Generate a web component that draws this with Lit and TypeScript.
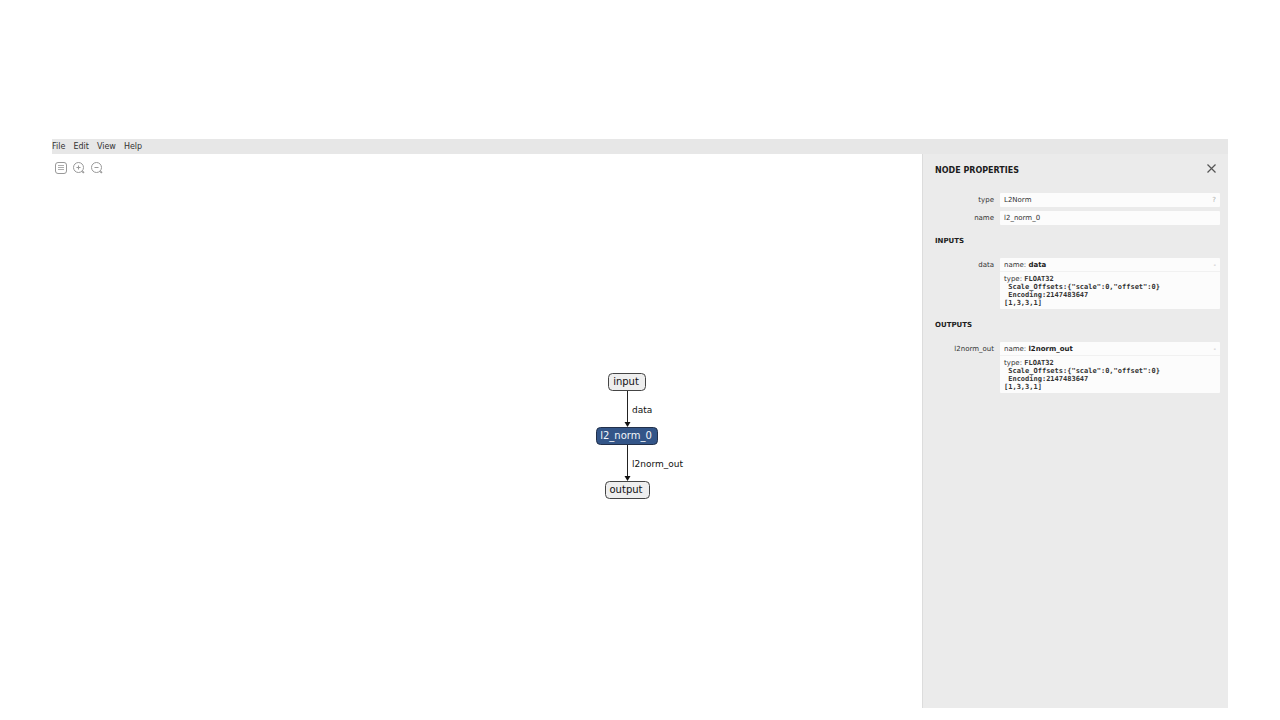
import { LitElement, html, svg, css } from "lit";
import { customElement, property } from "lit/decorators.js";

interface GraphNode { label: string; x: number; y: number; width: number; selected?: boolean }
interface GraphEdge { label: string; y1: number; y2: number }

const NODES: GraphNode[] = [
  { label: "input", x: 556, y: 219, width: 38 },
  { label: "l2_norm_0", x: 544, y: 273, width: 62, selected: true },
  { label: "output", x: 553, y: 327, width: 45 },
];
const EDGES: GraphEdge[] = [
  { label: "data", y1: 237, y2: 273 },
  { label: "l2norm_out", y1: 291, y2: 327 },
];

@customElement("graph-view")
class GraphView extends LitElement {
  static styles = css`
    :host { display: block; position: relative; flex: 1; min-width: 0; background: #fff; }
    .toolbar { position: absolute; top: 7px; left: 2px; display: flex; gap: 4px; }
    .tool { width: 14px; height: 14px; padding: 0; border: 0; background: none; }
    .tool svg { display: block; width: 14px; height: 14px; fill: none; stroke: #999; }
    .graph { display: block; width: 100%; height: 100%; }
    .node rect { fill: #eee; stroke: #444; stroke-width: 1; }
    .node.selected rect { fill: #335588; stroke: #22304a; }
    .node text { font-size: 10px; fill: #111; text-anchor: middle; }
    .node.selected text { fill: #f2f5fa; }
    .edge path { stroke: #222; stroke-width: 1; fill: none; }
    .edge polygon { fill: #111; }
    .edge text { font-size: 9px; fill: #111; }
  `;

  render() {
    return html`
      <svg class="graph" role="img" aria-label="Model graph">
        ${EDGES.map((e) => svg`<g class="edge">
          <path d="M575.5 ${e.y1}V${e.y2 - 3}"></path>
          <polygon points="572.5,${e.y2 - 5} 578.5,${e.y2 - 5} 575.5,${e.y2}"></polygon>
          <text x="580" y=${e.y1 + 22}>${e.label}</text>
        </g>`)}
        ${NODES.map((n) => svg`<g class=${n.selected ? "node selected" : "node"}>
          <rect x=${n.x + 0.5} y=${n.y + 0.5} width=${n.width - 1} height="17" rx="4"></rect>
          <text x="574" y=${n.y + 12}>${n.label}</text>
        </g>`)}
      </svg>
      <div class="toolbar">
        <button class="tool" aria-label="Model properties">
          <svg viewBox="0 0 14 14"><rect x="1.5" y="1.5" width="11" height="11" rx="2.5"></rect><path d="M4 4.5h6M4 6.5h6M4 8.5h6" stroke-width="0.8"></path></svg>
        </button>
        <button class="tool" aria-label="Zoom in">
          <svg viewBox="0 0 14 14"><circle cx="6.5" cy="6.5" r="5"></circle><path d="M4.5 6.5h4M6.5 4.5v4"></path><path d="M10.3 10.3l1.6 1.6" stroke-width="1.8"></path></svg>
        </button>
        <button class="tool" aria-label="Zoom out">
          <svg viewBox="0 0 14 14"><circle cx="6.5" cy="6.5" r="5"></circle><path d="M4.5 6.5h4"></path><path d="M10.3 10.3l1.6 1.6" stroke-width="1.8"></path></svg>
        </button>
      </div>
    `;
  }
}

@customElement("argument-card")
class ArgumentCard extends LitElement {
  @property() name = "";

  static styles = css`
    :host { display: block; background: #fcfcfc; color: #333; border-radius: 1px; line-height: 8px; }
    .head { display: flex; justify-content: space-between; height: 13px; line-height: 14px; padding: 0 4px; border-bottom: 1px solid #f1f1f1; }
    .toggle { padding: 0; border: 0; background: none; font: inherit; color: #aaa; }
    .body { padding: 3px 4px 2px; }
    .code { margin: 0; font: bold 7px/8px "DejaVu Sans Mono", monospace; }
    .first { font: bold 7px/8px "DejaVu Sans Mono", monospace; }
    b { color: #1c1c1c; }
  `;

  render() {
    return html`
      <div class="head"><span>name: <b>${this.name}</b></span><button class="toggle" aria-label="Collapse">-</button></div>
      <div class="body">
        <div>type: <span class="first">FLOAT32</span></div>
        <pre class="code"> Scale_Offsets:{"scale":0,"offset":0}
 Encoding:2147483647
[1,3,3,1]</pre>
      </div>
    `;
  }
}

@customElement("node-properties")
class NodeProperties extends LitElement {
  static styles = css`
    :host { display: block; box-sizing: border-box; flex: 0 0 306px; padding: 9px 8px 0 12px; border-left: 1px solid #dcdcdc; background: #ebebeb; color: #333; font-size: 7px; }
    .top { display: flex; justify-content: space-between; height: 30px; }
    h1 { margin: 0; font-size: 8px; line-height: 16px; color: #1c1c1c; }
    h2 { margin: 0; font-size: 7px; line-height: 12px; color: #1c1c1c; }
    .close { width: 16px; height: 12px; padding: 0; border: 0; background: none; }
    .close svg { display: block; width: 16px; height: 12px; stroke: #555; stroke-width: 1.2; }
    .fields { display: flex; flex-direction: column; gap: 4px; padding-bottom: 10px; }
    .row { display: grid; grid-template-columns: 59px minmax(0, 1fr); column-gap: 6px; }
    .label { text-align: right; line-height: 14px; }
    .field { display: flex; height: 14px; background: #fcfcfc; border-radius: 1px; }
    .value { flex: 1; min-width: 0; padding: 0 4px; border: 0; background: none; font: inherit; color: inherit; outline: none; }
    .help { padding: 0 4px; border: 0; background: none; font: inherit; color: #aaa; }
    .section { padding: 11px 0 10px; }
  `;

  render() {
    return html`
      <div class="top">
        <h1>NODE PROPERTIES</h1>
        <button class="close" aria-label="Close"><svg viewBox="0 0 16 12"><path d="M3.5 1.5l8 8M11.5 1.5l-8 8"></path></svg></button>
      </div>
      <div class="fields">
        <div class="row">
          <label class="label" for="type">type</label>
          <div class="field"><input class="value" id="type" readonly .value=${"L2Norm"} /><button class="help" aria-label="Documentation">?</button></div>
        </div>
        <div class="row">
          <label class="label" for="name">name</label>
          <div class="field"><input class="value" id="name" readonly .value=${"l2_norm_0"} /></div>
        </div>
      </div>
      <h2>INPUTS</h2>
      <div class="section row"><span class="label">data</span><argument-card name="data"></argument-card></div>
      <h2>OUTPUTS</h2>
      <div class="section row"><span class="label">l2norm_out</span><argument-card name="l2norm_out"></argument-card></div>
    `;
  }
}

@customElement("app-root")
class AppRoot extends LitElement {
  static styles = css`
    :host { display: flex; flex-direction: column; box-sizing: border-box; min-height: 100vh; padding: 139px 52px 12px; background: #fff; font-family: "DejaVu Sans", sans-serif; }
    .menu { display: flex; gap: 8px; height: 15px; background: #e7e7e7; }
    .item { padding: 0; border: 0; background: none; font: inherit; font-size: 8px; line-height: 15px; color: #333; }
    .main { display: flex; flex: 1; }
  `;

  render() {
    return html`
      <nav class="menu">
        ${["File", "Edit", "View", "Help"].map((m) => html`<button class="item">${m}</button>`)}
      </nav>
      <main class="main"><graph-view></graph-view><node-properties></node-properties></main>
    `;
  }
}
